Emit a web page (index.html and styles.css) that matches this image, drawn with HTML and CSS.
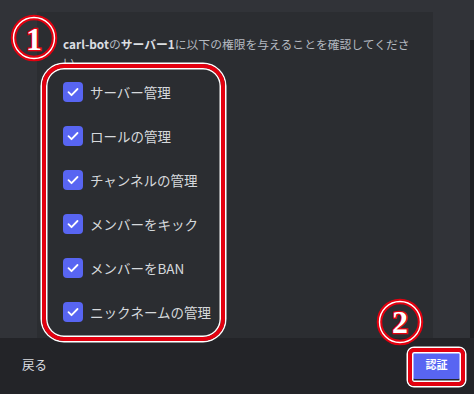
FILE: index.html
```html
<!DOCTYPE html>
<html lang="ja">
<head>
<meta charset="utf-8">
<link rel="stylesheet" href="styles.css">
</head>
<body>
<div class="app">
  <div class="content">
    <div class="panel">
      <p class="desc"><b>carl-bot</b>の<b>サーバー1</b>に以下の権限を与えることを確認してください。</p>
      <ul class="perms">
        <li class="perm"><span class="box"><svg viewBox="0 0 20 20" width="20" height="20"><path d="M5.5 10.2l3 3 6-6.2" fill="none" stroke="#fff" stroke-width="1.8" stroke-linecap="round" stroke-linejoin="round"/></svg></span>サーバー管理</li>
        <li class="perm"><span class="box"><svg viewBox="0 0 20 20" width="20" height="20"><path d="M5.5 10.2l3 3 6-6.2" fill="none" stroke="#fff" stroke-width="1.8" stroke-linecap="round" stroke-linejoin="round"/></svg></span>ロールの管理</li>
        <li class="perm"><span class="box"><svg viewBox="0 0 20 20" width="20" height="20"><path d="M5.5 10.2l3 3 6-6.2" fill="none" stroke="#fff" stroke-width="1.8" stroke-linecap="round" stroke-linejoin="round"/></svg></span>チャンネルの管理</li>
        <li class="perm"><span class="box"><svg viewBox="0 0 20 20" width="20" height="20"><path d="M5.5 10.2l3 3 6-6.2" fill="none" stroke="#fff" stroke-width="1.8" stroke-linecap="round" stroke-linejoin="round"/></svg></span>メンバーをキック</li>
        <li class="perm"><span class="box"><svg viewBox="0 0 20 20" width="20" height="20"><path d="M5.5 10.2l3 3 6-6.2" fill="none" stroke="#fff" stroke-width="1.8" stroke-linecap="round" stroke-linejoin="round"/></svg></span>メンバーをBAN</li>
        <li class="perm"><span class="box"><svg viewBox="0 0 20 20" width="20" height="20"><path d="M5.5 10.2l3 3 6-6.2" fill="none" stroke="#fff" stroke-width="1.8" stroke-linecap="round" stroke-linejoin="round"/></svg></span>ニックネームの管理</li>
      </ul>
    </div>
    <div class="scrollbar"></div>
  </div>
  <div class="footer">
    <span class="back">戻る</span>
    <button class="auth">認証</button>
  </div>

  <div class="mark mark-list"></div>
  <div class="mark mark-btn"></div>
  <svg class="num num-1" viewBox="0 0 48 48" width="48" height="48">
    <circle cx="24" cy="24" r="20.5" fill="none" stroke="#e3000f" stroke-width="5.5"/>
    <circle cx="24" cy="24" r="20.5" fill="none" stroke="#fff" stroke-width="1.4"/>
    <text x="24" y="36" text-anchor="middle" class="num-text">1</text>
  </svg>
  <svg class="num num-2" viewBox="0 0 48 48" width="48" height="48">
    <circle cx="24" cy="24" r="20.5" fill="none" stroke="#e3000f" stroke-width="5.5"/>
    <circle cx="24" cy="24" r="20.5" fill="none" stroke="#fff" stroke-width="1.4"/>
    <text x="24" y="35" text-anchor="middle" class="num-text">2</text>
  </svg>
</div>
</body>
</html>
```
FILE: styles.css
```css
* { box-sizing: border-box; }
html, body {
  margin: 0;
  padding: 0;
  width: 474px;
  height: 394px;
  overflow: hidden;
  background: #313338;
  font-family: "Noto Sans CJK JP", "Noto Sans", sans-serif;
}
.app {
  position: relative;
  width: 474px;
  height: 394px;
  display: flex;
  flex-direction: column;
}
.content {
  height: 338px;
  display: flex;
  padding-top: 12px;
  padding-left: 37px;
  overflow: hidden;
}
.panel {
  width: 396px;
  background: #2b2d31;
  padding: 23px 26px 0 26px;
}
.scrollbar {
  margin-left: auto;
  margin-top: 28px;
  width: 4px;
  background: #1e1f22;
}
.desc {
  margin: 0;
  font-size: 11.8px;
  line-height: 18px;
  color: #b5bac1;
  width: 352px;
}
.desc b {
  color: #dbdee1;
  font-weight: 700;
}
.perms {
  list-style: none;
  margin: -1px 0 0 0;
  padding: 0;
}
.perm {
  height: 44px;
  display: flex;
  align-items: center;
  gap: 7px;
  font-size: 13.5px;
  color: #d6d9dc;
}
.box {
  width: 20px;
  height: 20px;
  border-radius: 4px;
  background: #5865f2;
  display: flex;
}
.footer {
  flex: 1;
  background: #232428;
  display: flex;
  align-items: center;
  justify-content: space-between;
  padding: 0 13px 0 22px;
}
.back {
  font-size: 12.5px;
  color: #dbdee1;
  margin-top: -4px;
}
.auth {
  width: 49px;
  height: 30px;
  border: none;
  border-radius: 3px;
  background: #5865f2;
  color: #fff;
  font-family: "Noto Sans CJK JP", sans-serif;
  font-size: 11px;
  font-weight: 700;
  padding: 0;
  margin-top: -4px;
}
.mark {
  position: absolute;
  border: 4px solid #e3000f;
  box-shadow: 0 0 0 1.5px #fff, inset 0 0 0 1.5px #fff;
}
.mark-list {
  left: 42px;
  top: 64px;
  width: 183px;
  height: 277px;
  border-radius: 22px;
}
.mark-btn {
  left: 408px;
  top: 348px;
  width: 57px;
  height: 38px;
  border-radius: 6px;
}
.num {
  position: absolute;
}
.num-1 { left: 10px; top: 14px; }
.num-2 { left: 376px; top: 298px; }
.num-text {
  font-family: "Liberation Serif", serif;
  font-weight: 700;
  font-size: 32px;
  fill: #fff;
  stroke: #e3000f;
  stroke-width: 2.5px;
  paint-order: stroke;
}
```
